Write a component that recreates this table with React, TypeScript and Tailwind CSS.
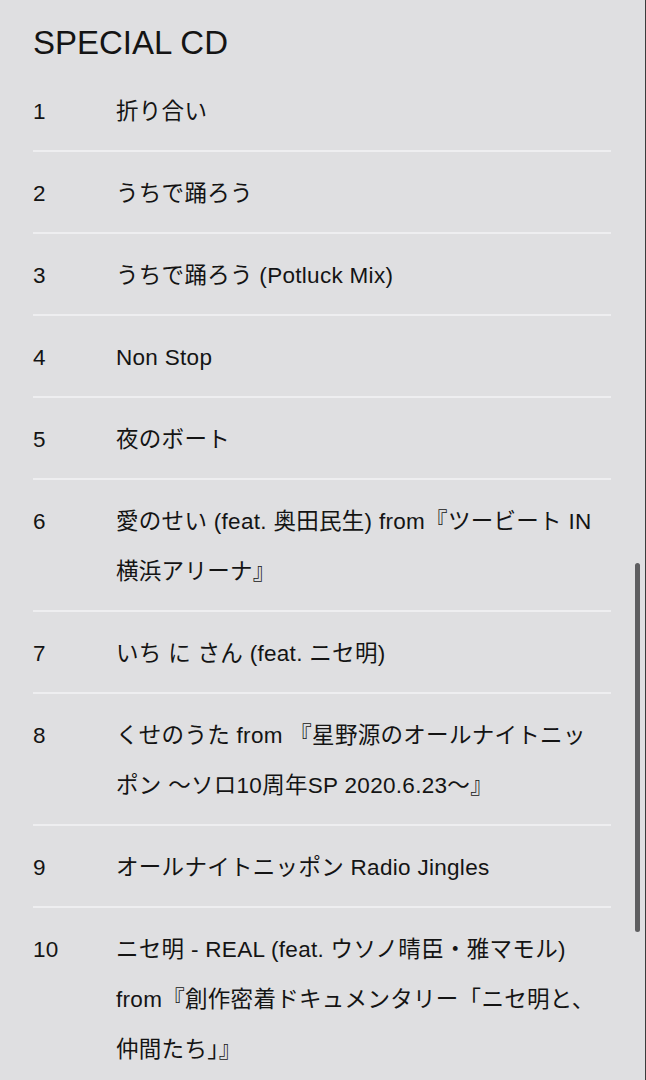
import React from "react";

const tracks: { n: string; lines: string[] }[] = [
  { n: "1", lines: ["折り合い"] },
  { n: "2", lines: ["うちで踊ろう"] },
  { n: "3", lines: ["うちで踊ろう (Potluck Mix)"] },
  { n: "4", lines: ["Non Stop"] },
  { n: "5", lines: ["夜のボート"] },
  { n: "6", lines: ["愛のせい (feat. 奥田民生) from『ツービート IN", "横浜アリーナ』"] },
  { n: "7", lines: ["いち に さん (feat. ニセ明)"] },
  { n: "8", lines: ["くせのうた from 『星野源のオールナイトニッ", "ポン 〜ソロ10周年SP 2020.6.23〜』"] },
  { n: "9", lines: ["オールナイトニッポン Radio Jingles"] },
  { n: "10", lines: ["ニセ明 - REAL (feat. ウソノ晴臣・雅マモル)", "from『創作密着ドキュメンタリー「ニセ明と、", "仲間たち」』"] },
];

export default function App() {
  return (
    <div
      className="relative w-[646px] h-[1080px] overflow-hidden bg-[#dfdfe1] text-[#141414] border-r border-[#3c3c3c]"
      style={{ fontFamily: '"Liberation Sans", Arial, "Noto Sans CJK JP", sans-serif' }}
    >
      <div className="pl-[33px] pr-[34px]">
        <div className="h-[70px] pt-[26px]">
          <h1 className="text-[33px] leading-[33px] font-normal">SPECIAL CD</h1>
        </div>
        {tracks.map((t, i) => (
          <div key={t.n}>
            <div className="flex pt-[17px] pb-[13px] text-[22.5px] leading-[50px] tracking-[0.3px]">
              <div className="w-[83px] shrink-0">{t.n}</div>
              <div className="flex flex-col">
                {t.lines.map((l) => (
                  <span key={l} className="whitespace-nowrap">{l}</span>
                ))}
              </div>
            </div>
            {i < tracks.length - 1 && <div className="h-[2px] bg-[#eeeef0]" />}
          </div>
        ))}
      </div>
      <div className="absolute left-[635px] top-[563px] w-[5px] h-[369px] rounded-full bg-[#5e5e60]" />
    </div>
  );
}
